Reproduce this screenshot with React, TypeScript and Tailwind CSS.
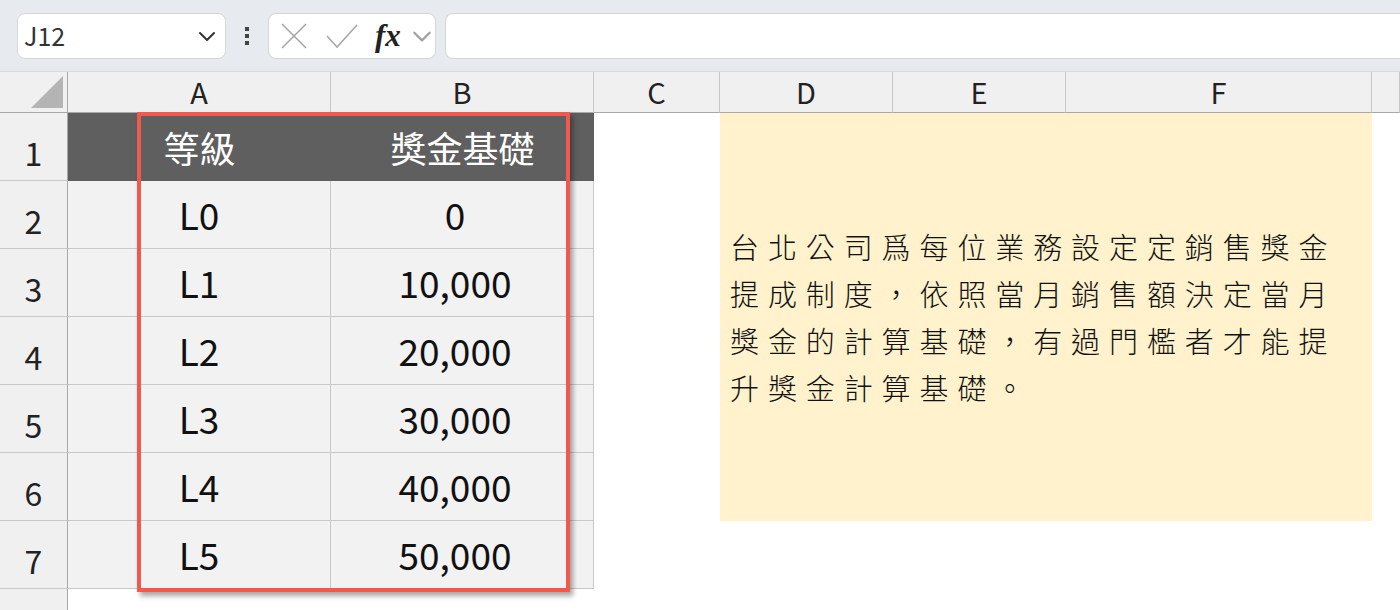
import React from 'react'

const cols = ['A', 'B', 'C', 'D', 'E', 'F', '']

const rows = [
  { level: 'L0', base: '0' },
  { level: 'L1', base: '10,000' },
  { level: 'L2', base: '20,000' },
  { level: 'L3', base: '30,000' },
  { level: 'L4', base: '40,000' },
  { level: 'L5', base: '50,000' },
]

const font = { fontFamily: '"Noto Sans CJK TC", "Noto Sans", sans-serif' }

const Chevron: React.FC<{ className?: string }> = ({ className }) => (
  <svg viewBox="0 0 20 20" className={className} fill="none" stroke="currentColor" strokeWidth="2" strokeLinecap="round" strokeLinejoin="round">
    <path d="M3 7l7 7 7-7" />
  </svg>
)

const Toolbar: React.FC = () => (
  <div className="flex h-[72px] items-center border-b border-[#d6d9dd] bg-[#e7eaee] pl-[17px]">
    <div className="flex h-[46px] w-[209px] items-center justify-between rounded-lg border border-[#d4d6da] bg-white pl-[6px] pr-[8px]">
      <span className="text-[25px] text-[#333]" style={font}>J12</span>
      <Chevron className="h-[20px] w-[20px] text-[#333]" />
    </div>
    <div className="flex w-[42px] flex-col items-center justify-center gap-[3px]">
      <span className="h-[4px] w-[4px] bg-[#444]" />
      <span className="h-[4px] w-[4px] bg-[#444]" />
      <span className="h-[4px] w-[4px] bg-[#444]" />
    </div>
    <div className="flex h-[46px] w-[168px] items-center rounded-lg border border-[#d4d6da] bg-white pl-[10px]">
      <svg viewBox="0 0 30 30" className="h-[30px] w-[30px] text-[#a8a8a8]" fill="none" stroke="currentColor" strokeWidth="1.6">
        <path d="M3 3l24 24M27 3L3 27" />
      </svg>
      <svg viewBox="0 0 34 30" className="ml-[16px] h-[30px] w-[34px] text-[#a8a8a8]" fill="none" stroke="currentColor" strokeWidth="1.6">
        <path d="M2 15l10 11L32 4" />
      </svg>
      <span
        className="ml-[16px] text-[31px] font-bold italic leading-none text-[#222]"
        style={{ fontFamily: '"Liberation Serif", serif' }}
      >
        fx
      </span>
      <Chevron className="ml-[10px] h-[22px] w-[22px] text-[#a0a0a0]" />
    </div>
    <div className="ml-[9px] h-[46px] flex-1 rounded-l-lg border border-r-0 border-[#d4d6da] bg-white" />
  </div>
)

const App: React.FC = () => {
  return (
    <div className="h-[610px] w-[1400px] overflow-hidden bg-white" style={font}>
      <Toolbar />
      <div className="relative grid grid-cols-[68px_263px_263px_126px_173px_173px_306px_1fr] grid-rows-[41px_repeat(8,68px)]">
        {/* corner */}
        <div className="relative border-b border-r border-[#a8a8a8] bg-[#f0f0f0]">
          <div className="absolute bottom-[4px] right-[4px] h-0 w-0 border-b-[32px] border-l-[32px] border-b-[#b4b4b4] border-l-transparent" />
        </div>
        {cols.map((c, i) => (
          <div
            key={'h' + i}
            className="flex items-center justify-center border-b border-r border-b-[#a8a8a8] border-r-[#c8c8c8] bg-[#f0f0f0] text-[29px] text-[#222]"
          >
            {c}
          </div>
        ))}

        {/* row 1 */}
        <div className="flex items-end justify-center border-b border-r border-b-[#c8c8c8] border-r-[#a8a8a8] bg-[#f0f0f0] pb-[4px] text-[32px] text-[#222]">
          1
        </div>
        <div className="flex items-center justify-center bg-[#5f5f5f] text-[36px] text-white">等級</div>
        <div className="flex items-center justify-center bg-[#5f5f5f] text-[36px] text-white">獎金基礎</div>
        <div />
        <div className="col-span-3 row-span-6 flex items-center bg-[#fff2cc] pl-[10px] pr-[16px]">
          <p className="text-[29px] font-light leading-[47px] tracking-[8.9px] text-[#111]">
            台北公司爲每位業務設定定銷售獎金提成制度，依照當月銷售額決定當月獎金的計算基礎，有過門檻者才能提升獎金計算基礎。
          </p>
        </div>
        <div />

        {rows.map((r, i) => (
          <React.Fragment key={r.level}>
            <div className="flex items-end justify-center border-b border-r border-b-[#c8c8c8] border-r-[#a8a8a8] bg-[#f0f0f0] pb-[4px] text-[32px] text-[#222]">
              {i + 2}
            </div>
            <div className="flex items-center justify-center border-b border-r border-[#c8c8c8] bg-[#f2f2f2] text-[37px] text-[#111]">
              {r.level}
            </div>
            <div className="flex items-center justify-center border-b border-r border-[#c8c8c8] bg-[#f2f2f2] pr-[14px] text-[37px] text-[#111]">
              {r.base}
            </div>
            <div />
            {i === 5 ? (
              <>
                <div />
                <div />
                <div />
              </>
            ) : null}
            <div />
          </React.Fragment>
        ))}

        {/* row 8 */}
        <div className="border-r border-[#a8a8a8] bg-[#f0f0f0]" />

        {/* selection outline */}
        <div className="pointer-events-none absolute left-[137px] top-[40px] h-[480px] w-[433px] border-4 border-[#f0594b] shadow-[3px_4px_5px_rgba(0,0,0,0.35)]" />
      </div>
    </div>
  )
}

export default App
